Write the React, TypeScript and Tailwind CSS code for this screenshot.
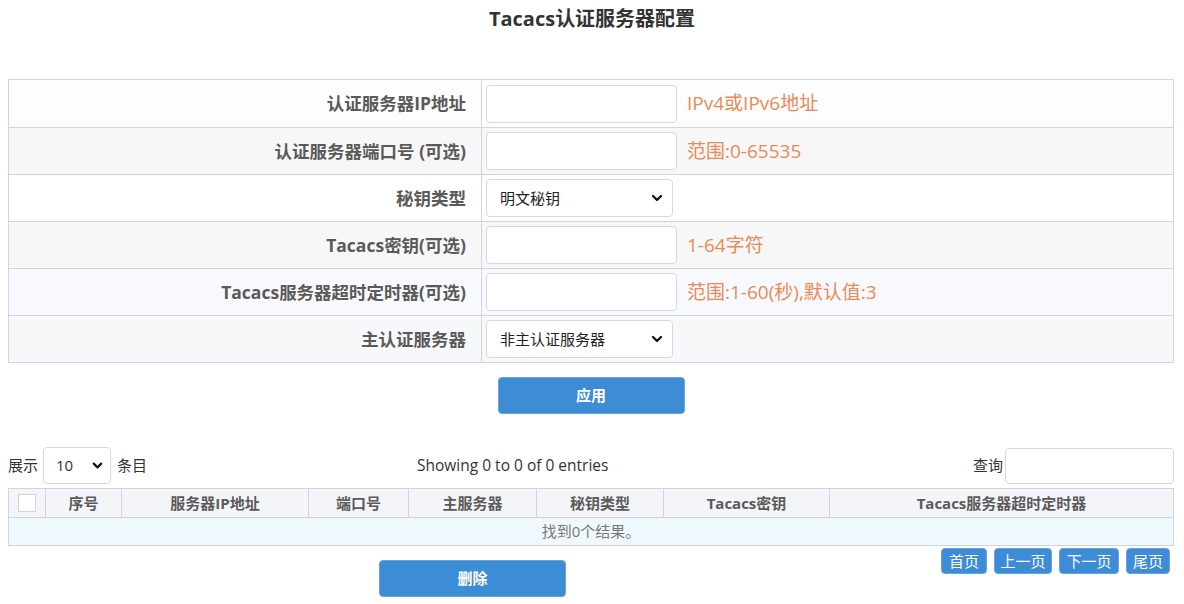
import { ChevronDown } from "lucide-react";

const rows: {
  label: string;
  kind: "input" | "select";
  hint?: string;
  value?: string;
  bg: string;
}[] = [
  { label: "认证服务器IP地址", kind: "input", hint: "IPv4或IPv6地址", bg: "bg-[#fdfdfd]" },
  { label: "认证服务器端口号 (可选)", kind: "input", hint: "范围:0-65535", bg: "bg-[#f7f7f8]" },
  { label: "秘钥类型", kind: "select", value: "明文秘钥", bg: "bg-white" },
  { label: "Tacacs密钥(可选)", kind: "input", hint: "1-64字符", bg: "bg-[#f7f7f8]" },
  { label: "Tacacs服务器超时定时器(可选)", kind: "input", hint: "范围:1-60(秒),默认值:3", bg: "bg-[#f8f9fc]" },
  { label: "主认证服务器", kind: "select", value: "非主认证服务器", bg: "bg-[#f7f8fa]" },
];

const columns = [
  { name: "序号", w: "w-[76px]" },
  { name: "服务器IP地址", w: "w-[187px]" },
  { name: "端口号", w: "w-[100px]" },
  { name: "主服务器", w: "w-[128px]" },
  { name: "秘钥类型", w: "w-[127px]" },
  { name: "Tacacs密钥", w: "w-[166px]" },
  { name: "Tacacs服务器超时定时器", w: "" },
];

const pages = [
  { name: "首页", w: "w-[46px]" },
  { name: "上一页", w: "w-[58px]" },
  { name: "下一页", w: "w-[60px]" },
  { name: "尾页", w: "w-[44px]" },
];

function FakeSelect({ value, width }: { value: string; width: string }) {
  return (
    <div
      className={`flex h-[38px] ${width} items-center justify-between rounded-[4px] border border-[#d6d9de] bg-white pl-[13px] pr-[7px] text-[15px] text-[#222]`}
    >
      <span>{value}</span>
      <ChevronDown className="h-[16px] w-[16px] text-[#111]" strokeWidth={3.4} />
    </div>
  );
}

export default function App() {
  return (
    <div
      className="min-h-[604px] w-[1184px] bg-white text-[#333]"
      style={{ fontFamily: '"Open Sans", "Noto Sans CJK SC", sans-serif' }}
    >
      <h1 className="pt-[6px] text-center text-[20px] font-bold leading-[26px] text-[#333]">
        Tacacs认证服务器配置
      </h1>

      {/* config form */}
      <div className="ml-[8px] mr-[10px] mt-[47px] border border-[#cfd4df]">
        {rows.map((r, i) => (
          <div
            key={r.label}
            className={`grid h-[47px] grid-cols-[473px_1fr] ${r.bg} ${
              i > 0 ? "border-t border-[#cfd4df]" : "h-[46px]"
            }`}
          >
            <div className="flex items-center justify-end border-r border-[#cfd4df] pr-[15px] text-[17.5px] font-bold text-[#5a5a5a]">
              {r.label}
            </div>
            <div className="flex items-center pl-[4px]">
              {r.kind === "input" ? (
                <div className="h-[38px] w-[191px] rounded-[4px] border border-[#d6d9de] bg-white" />
              ) : (
                <FakeSelect value={r.value!} width="w-[187px]" />
              )}
              {r.hint && (
                <span className="ml-[10px] text-[19px] text-[#ea8a55]">{r.hint}</span>
              )}
            </div>
          </div>
        ))}
      </div>

      <div className="mt-[14px] flex justify-center">
        <button className="ml-[-2px] h-[37px] w-[187px] rounded-[4px] border border-[#6aa3db] bg-[#3d8cd6] text-[15px] font-bold text-white">
          应用
        </button>
      </div>

      {/* data table controls */}
      <div className="ml-[8px] mr-[10px] mt-[33px] flex h-[37px] items-center text-[15px] text-[#333]">
        <span>展示</span>
        <div className="ml-[5px] flex h-[37px] w-[68px] items-center justify-between rounded-[4px] border border-[#d6d9de] bg-white pl-[12px] pr-[5px]">
          <span>10</span>
          <ChevronDown className="h-[15px] w-[15px] text-[#111]" strokeWidth={3.4} />
        </div>
        <span className="ml-[6px]">条目</span>
        <span className="ml-[270px] text-[15.5px]">Showing 0 to 0 of 0 entries</span>
        <span className="ml-auto">查询</span>
        <div className="ml-[2px] h-[36px] w-[169px] rounded-[4px] border border-[#d6d9de] bg-white" />
      </div>

      <div className="ml-[8px] mr-[10px] mt-[4px] border border-[#cfd4df] text-[15px]">
        <div className="flex h-[28px] bg-[#f4f5f9] font-bold text-[#5a5a5a]">
          <div className="flex w-[37px] items-center justify-center border-r border-[#cfd4df]">
            <div className="h-[18px] w-[18px] border border-[#cfd4df] bg-white" />
          </div>
          {columns.map((c, i) => (
            <div
              key={c.name}
              className={`flex items-center justify-center ${c.w || "flex-1"} ${
                i < columns.length - 1 ? "border-r border-[#cfd4df]" : ""
              }`}
            >
              {c.name}
            </div>
          ))}
        </div>
        <div className="flex h-[28px] items-center justify-center border-t border-[#cfd4df] bg-[#eff8fc] text-[#777]">
          找到0个结果。
        </div>
      </div>

      <div className="ml-[8px] mr-[10px] flex items-start">
        <button className="ml-[371px] mt-[14px] h-[37px] w-[187px] rounded-[4px] border border-[#6aa3db] bg-[#3d8cd6] text-[15px] font-bold text-white">
          删除
        </button>
        <div className="ml-auto mr-[4px] mt-[2px] flex gap-[7px]">
          {pages.map((p) => (
            <button
              key={p.name}
              className={`h-[26px] ${p.w} rounded-[4px] border border-[#6aa3db] bg-[#3d8cd6] text-[15px] text-white`}
            >
              {p.name}
            </button>
          ))}
        </div>
      </div>
    </div>
  );
}
